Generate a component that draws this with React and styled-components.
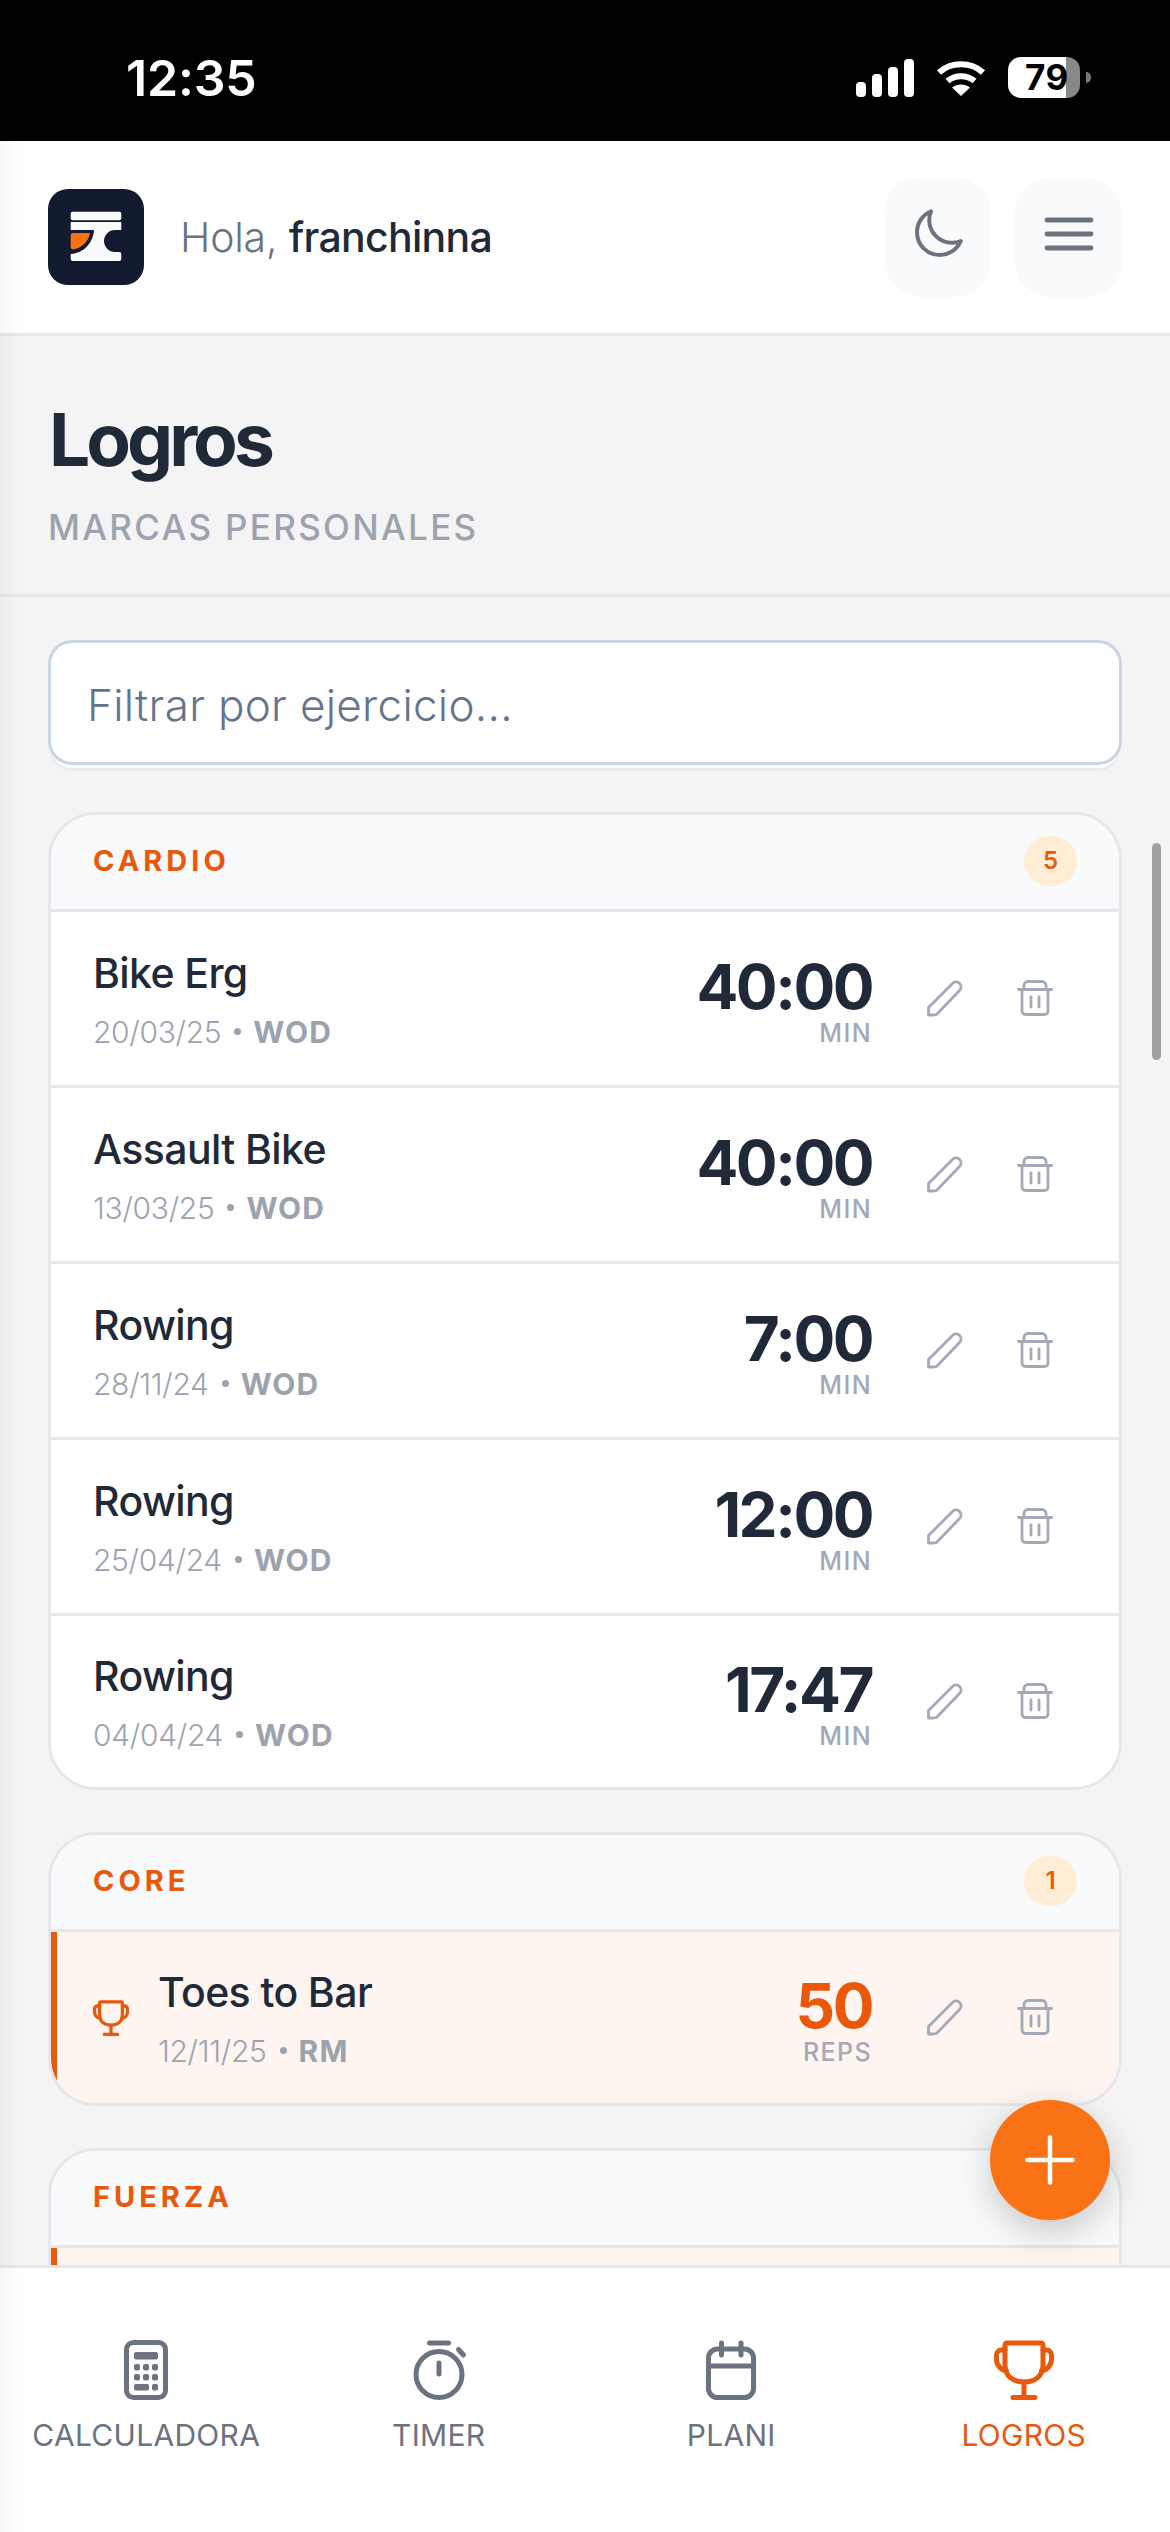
import React from "react";
import styled, { createGlobalStyle } from "styled-components";

const GlobalStyle = createGlobalStyle`
  * {
    box-sizing: border-box;
  }
  html, body {
    margin: 0;
    padding: 0;
    background: #f4f4f5;
    font-family: Inter, "Liberation Sans", sans-serif;
  }
`;

const Screen = styled.div`
  position: relative;
  width: 1170px;
  height: 2532px;
  display: flex;
  flex-direction: column;
  overflow: hidden;
  background: #f4f4f5;
`;

const EdgeShade = styled.div`
  position: absolute;
  top: 141px;
  left: 0;
  bottom: 0;
  width: 22px;
  background: linear-gradient(to right, rgba(0, 0, 0, 0.03), rgba(0, 0, 0, 0));
  pointer-events: none;
  z-index: 5;
`;

/* status bar */
const StatusBar = styled.div`
  height: 141px;
  flex-shrink: 0;
  background: #000;
  color: #fff;
  display: flex;
  align-items: flex-start;
  justify-content: space-between;
  padding: 57px 79px 0 126px;
`;

const Clock = styled.div`
  font-size: 50px;
  font-weight: 600;
  line-height: 42px;
  letter-spacing: -0.2px;
`;

const StatusIcons = styled.div`
  display: flex;
  align-items: flex-start;
`;

const Signal = styled.svg`
  width: 58px;
  height: 40px;
  margin-top: 1px;
  margin-right: 22px;
`;

const Wifi = styled.svg`
  width: 50px;
  height: 38px;
  margin-top: 2px;
  margin-right: 22px;
`;

const BatteryBody = styled.div`
  width: 72px;
  height: 41px;
  border-radius: 13px;
  overflow: hidden;
  background: linear-gradient(to right, #fff 0 58px, #888 58px);
  color: #000;
  font-size: 35px;
  font-weight: 700;
  line-height: 41px;
  padding-left: 17px;
  letter-spacing: 0.5px;
`;

const BatteryTip = styled.div`
  width: 5px;
  height: 11px;
  margin: 15px 0 0 6px;
  background: #777;
  border-radius: 0 6px 6px 0;
`;

/* top header */
const Header = styled.header`
  height: 195px;
  flex-shrink: 0;
  background: #fff;
  border-bottom: 3px solid #e5e7eb;
  display: flex;
  align-items: center;
  padding: 0 48px;
`;

const Logo = styled.svg`
  width: 96px;
  height: 96px;
  flex-shrink: 0;
`;

const Greeting = styled.div`
  margin-left: 36px;
  font-size: 41px;
  font-weight: 300;
  color: #6b7280;
  letter-spacing: -0.2px;
  flex: 1;

  strong {
    font-weight: 500;
    color: #1f2937;
    letter-spacing: -0.7px;
  }
`;

const HeaderButton = styled.button`
  width: 107px;
  height: 120px;
  margin-left: 24px;
  background: #f9fafb;
  border: none;
  border-radius: 36px;
  padding: 0 0 6px;
  display: flex;
  align-items: center;
  justify-content: center;
  color: #6b7280;
`;

/* main scroll area */
const Main = styled.main`
  flex: 1;
  min-height: 0;
  overflow: hidden;
`;

const PageHead = styled.div`
  height: 261px;
  padding: 60px 48px 0;
  border-bottom: 3px solid #e5e7eb;
`;

const Title = styled.h1`
  margin: 0 0 0 1px;
  font-size: 73px;
  line-height: 88px;
  font-weight: 700;
  letter-spacing: -4px;
  color: #1f2937;
`;

const Subtitle = styled.div`
  margin-top: 23px;
  font-size: 35px;
  line-height: 40px;
  font-weight: 500;
  letter-spacing: 2.3px;
  color: #9ca3af;
`;

const Content = styled.div`
  padding: 43px 48px 0;
  display: flex;
  flex-direction: column;
`;

const FilterInput = styled.input`
  width: 100%;
  height: 125px;
  border: 3px solid #cbd5e1;
  border-radius: 24px;
  background: #fff;
  padding: 4px 36px 0;
  font-family: inherit;
  font-size: 44px;
  font-weight: 300;
  letter-spacing: 0.3px;
  color: #1f2937;
  outline: none;
  margin-bottom: 47px;
  box-shadow: 0 6px 0 -3px #fff, 0 9px 0 -3px #e9eaec;

  &::placeholder {
    color: #64748b;
    opacity: 1;
  }
`;

const Card = styled.section`
  border: 3px solid #e5e7eb;
  border-radius: 48px;
  overflow: hidden;
  background: #fff;
  margin-bottom: 42px;
`;

const CardHeader = styled.div`
  height: 97px;
  background: #f9fafb;
  border-bottom: 3px solid #e5e7eb;
  display: flex;
  align-items: center;
  justify-content: space-between;
  padding: 0 42px 3px;
`;

const CardTitle = styled.div`
  font-size: 29px;
  font-weight: 700;
  letter-spacing: 4px;
  color: #ea580c;
`;

const CountBadge = styled.div`
  min-width: 53px;
  height: 50px;
  padding: 0 19px;
  border-radius: 25px;
  background: #ffedd5;
  color: #ea580c;
  font-size: 24px;
  font-weight: 600;
  display: flex;
  align-items: center;
  justify-content: center;
`;

const Row = styled.div`
  height: ${(p) => (p.$last ? "171px" : "176px")};
  display: flex;
  align-items: center;
  padding: 0 54px 0 ${(p) => (p.$record ? "36px" : "42px")};
  background: ${(p) => (p.$record ? "#fef5f0" : "#fff")};
  border-left: ${(p) => (p.$record ? "6px solid #ea580c" : "none")};
  border-bottom: ${(p) => (p.$last ? "none" : "3px solid #e5e7eb")};
`;

const RecordMark = styled.div`
  width: 36px;
  margin-right: 29px;
  color: #ea580c;
  display: flex;
  flex-shrink: 0;
`;

const RowInfo = styled.div`
  flex: 1;
  min-width: 0;
`;

const RowName = styled.div`
  font-size: 41px;
  line-height: 50px;
  font-weight: 500;
  color: #1f2937;
  letter-spacing: -0.6px;
`;

const RowMeta = styled.div`
  margin-top: 16px;
  display: flex;
  align-items: center;
  font-size: 30px;
  line-height: 36px;
  color: #9ca3af;
`;

const MetaDate = styled.span`
  font-weight: 300;
  letter-spacing: -0.3px;
`;

const MetaDot = styled.span`
  width: 7px;
  height: 7px;
  border-radius: 50%;
  background: #9ca3af;
  margin: 0 12px 0 13px;
`;

const MetaKind = styled.span`
  font-weight: 700;
  letter-spacing: 1.2px;
`;

const RowValue = styled.div`
  display: flex;
  flex-direction: column;
  align-items: flex-end;
  margin-right: 43px;
  margin-top: 4px;
`;

const ValueNumber = styled.div`
  font-size: 62px;
  line-height: 64px;
  font-weight: 700;
  letter-spacing: -2.5px;
  color: ${(p) => (p.$record ? "#ea580c" : "#1f2937")};
`;

const ValueUnit = styled.div`
  font-size: 25px;
  line-height: 28px;
  font-weight: 500;
  letter-spacing: 1.4px;
  color: #a3a9b6;
`;

const ActionButton = styled.button`
  width: 60px;
  height: 60px;
  background: none;
  border: none;
  padding: 0 0 2px;
  margin-left: ${(p) => (p.$spaced ? "30px" : "0")};
  display: flex;
  align-items: center;
  justify-content: center;
  color: #a3a9b6;
`;

/* overlays */
const ScrollThumb = styled.div`
  position: absolute;
  left: 1152px;
  top: 843px;
  width: 9px;
  height: 217px;
  border-radius: 5px;
  background: #a0a0a0;
`;

const Fab = styled.button`
  position: absolute;
  left: 990px;
  top: 2100px;
  width: 120px;
  height: 120px;
  border-radius: 50%;
  border: none;
  padding: 0;
  background: #f97316;
  color: #fff;
  display: flex;
  align-items: center;
  justify-content: center;
  box-shadow: 0 12px 36px rgba(0, 0, 0, 0.2);
  z-index: 3;
`;

/* bottom nav */
const BottomNav = styled.nav`
  height: 267px;
  flex-shrink: 0;
  background: #fff;
  border-top: 3px solid #e5e7eb;
  display: grid;
  grid-template-columns: repeat(4, 1fr);
  padding-top: 72px;
  position: relative;
  z-index: 2;
`;

const NavItem = styled.div`
  display: flex;
  flex-direction: column;
  align-items: center;
  color: ${(p) => (p.$active ? "#ea580c" : "#6b7280")};
`;

const NavIcon = styled.div`
  height: 60px;
  display: flex;
  align-items: center;
  justify-content: center;
`;

const NavLabel = styled.div`
  margin-top: 17px;
  font-size: 30px;
  line-height: 36px;
  font-weight: 400;
  letter-spacing: 0.3px;
`;

const stroke = {
  fill: "none",
  stroke: "currentColor",
  strokeLinecap: "round",
  strokeLinejoin: "round",
};

function TrophyIcon({ size, width = 5 }) {
  return (
    <svg width={size} height={size} viewBox="0 0 60 60" {...stroke} strokeWidth={width}>
      <path d="M13 3h34a2 2 0 0 1 2 2v20c0 11-8 17-19 17s-19-6-19-17V5a2 2 0 0 1 2-2z" />
      <path d="M11 10H7.500a5 5 0 0 0-5 5v4c0 6 4 11 10 12" />
      <path d="M49 10h3.500a5 5 0 0 1 5 5v4c0 6-4 11-10 12" />
      <path d="M30 42v15M19 57.500h22" />
    </svg>
  );
}

function PencilIcon() {
  return (
    <svg width="40" height="40" viewBox="0 0 40 40" {...stroke} strokeWidth="2.8">
      <path d="M3.500 37v-7.500L28 5a5 5 0 0 1 7 7L11.500 36.500 9 37z" />
    </svg>
  );
}

function TrashIcon() {
  return (
    <svg width="36" height="36" viewBox="0 0 36 36" {...stroke} strokeWidth="2.8">
      <path d="M1.500 9.500h33" />
      <path d="M7 9V5.500a4 4 0 0 1 4-4h14a4 4 0 0 1 4 4V9" />
      <path d="M5 9.500V31a3.500 3.500 0 0 0 3.500 3.500h19A3.500 3.500 0 0 0 31 31V9.500" />
      <path d="M14 17v10M22 17v10" />
    </svg>
  );
}

function PersonalBest({ item, last }) {
  return (
    <Row $record={item.record} $last={last}>
      {item.record && (
        <RecordMark>
          <TrophyIcon size={36} width={5.5} />
        </RecordMark>
      )}
      <RowInfo>
        <RowName>{item.name}</RowName>
        <RowMeta>
          <MetaDate>{item.date}</MetaDate>
          <MetaDot />
          <MetaKind>{item.kind}</MetaKind>
        </RowMeta>
      </RowInfo>
      <RowValue>
        <ValueNumber $record={item.record}>{item.value}</ValueNumber>
        <ValueUnit>{item.unit}</ValueUnit>
      </RowValue>
      <ActionButton>
        <PencilIcon />
      </ActionButton>
      <ActionButton $spaced>
        <TrashIcon />
      </ActionButton>
    </Row>
  );
}

const groups = [
  {
    title: "CARDIO",
    count: 5,
    items: [
      { name: "Bike Erg", date: "20/03/25", kind: "WOD", value: "40:00", unit: "MIN" },
      { name: "Assault Bike", date: "13/03/25", kind: "WOD", value: "40:00", unit: "MIN" },
      { name: "Rowing", date: "28/11/24", kind: "WOD", value: "7:00", unit: "MIN" },
      { name: "Rowing", date: "25/04/24", kind: "WOD", value: "12:00", unit: "MIN" },
      { name: "Rowing", date: "04/04/24", kind: "WOD", value: "17:47", unit: "MIN" },
    ],
  },
  {
    title: "CORE",
    count: 1,
    items: [
      { name: "Toes to Bar", date: "12/11/25", kind: "RM", value: "50", unit: "REPS", record: true },
    ],
  },
];

export default function App() {
  return (
    <Screen>
      <GlobalStyle />
      <StatusBar>
        <Clock>12:35</Clock>
        <StatusIcons>
          <Signal viewBox="0 0 58 40" fill="#fff">
            <rect x="0" y="24" width="10" height="15" rx="4" />
            <rect x="16" y="16" width="10" height="23" rx="4" />
            <rect x="32" y="9" width="10" height="30" rx="4" />
            <rect x="48" y="1" width="10" height="38" rx="4" />
          </Signal>
          <Wifi viewBox="0 0 50 38">
            <path d="M3 13.500C15 2.500 35 2.500 47 13.500" fill="none" stroke="#fff" strokeWidth="6" />
            <path d="M11.500 22C19 15.500 31 15.500 38.500 22" fill="none" stroke="#fff" strokeWidth="6" />
            <path d="M25 37L16 28.500C21 24.500 29 24.500 34 28.500z" fill="#fff" />
          </Wifi>
          <BatteryBody>79</BatteryBody>
          <BatteryTip />
        </StatusIcons>
      </StatusBar>

      <Header>
        <Logo viewBox="0 0 96 96">
          <rect width="96" height="96" rx="20" fill="#111a2e" />
          <rect x="22.700" y="22.700" width="50.600" height="8.500" rx="2" fill="#f8fafc" />
          <path
            d="M22.700 33H73.300V41H67A11 11 0 0 0 67 63H71.300A2 2 0 0 1 73.300 65V70A2 2 0 0 1 71.300 72H24.700A2 2 0 0 1 22.700 70V65C36 64 45 54 46 41H22.700Z"
            fill="#f8fafc"
          />
          <path d="M25 44H42C41 52 34 59 25 60.500A2.500 2.500 0 0 1 22.700 58V46A2.500 2.500 0 0 1 25 44Z" fill="#f97316" />
        </Logo>
        <Greeting>
          Hola, <strong>franchinna</strong>
        </Greeting>
        <HeaderButton>
          <svg width="56" height="56" viewBox="0 0 24 24" {...stroke} strokeWidth="1.7">
            <path d="M21.752 15.002A9.72 9.72 0 0 1 18 15.750c-5.385 0-9.750-4.365-9.750-9.750 0-1.330.266-2.597.748-3.752A9.753 9.753 0 0 0 3 11.250C3 16.635 7.365 21 12.750 21a9.753 9.753 0 0 0 9.002-5.998Z" />
          </svg>
        </HeaderButton>
        <HeaderButton>
          <svg width="64" height="64" viewBox="0 0 24 24" {...stroke} strokeWidth="1.8">
            <path d="M3.750 6.750h16.500M3.750 12h16.500M3.750 17.250h16.500" />
          </svg>
        </HeaderButton>
      </Header>

      <Main>
        <PageHead>
          <Title>Logros</Title>
          <Subtitle>MARCAS PERSONALES</Subtitle>
        </PageHead>
        <Content>
          <FilterInput placeholder="Filtrar por ejercicio..." />
          {groups.map((group) => (
            <Card key={group.title}>
              <CardHeader>
                <CardTitle>{group.title}</CardTitle>
                <CountBadge>{group.count}</CountBadge>
              </CardHeader>
              {group.items.map((item, i) => (
                <PersonalBest
                  key={item.date}
                  item={item}
                  last={i === group.items.length - 1}
                />
              ))}
            </Card>
          ))}
          {/* only the top of this group shows above the nav, its badge digit sits under the fab */}
          <Card>
            <CardHeader>
              <CardTitle>FUERZA</CardTitle>
              <CountBadge />
            </CardHeader>
            <Row $record />
          </Card>
        </Content>
      </Main>

      <BottomNav>
        <NavItem>
          <NavIcon>
            <svg width="44" height="60" viewBox="0 0 44 60">
              <rect x="2.500" y="2.500" width="39" height="55" rx="7" fill="none" stroke="currentColor" strokeWidth="5" />
              <g fill="currentColor">
                <rect x="10" y="12" width="24" height="7.500" rx="2" />
                <rect x="10" y="24" width="6" height="6.500" rx="2" />
                <rect x="19" y="24" width="6" height="6.500" rx="2" />
                <rect x="28" y="24" width="6" height="6.500" rx="2" />
                <rect x="10" y="34" width="6" height="6.500" rx="2" />
                <rect x="19" y="34" width="6" height="6.500" rx="2" />
                <rect x="28" y="34" width="6" height="6.500" rx="2" />
                <rect x="10" y="44" width="15" height="6.500" rx="2" />
                <rect x="28" y="44" width="6" height="6.500" rx="2" />
              </g>
            </svg>
          </NavIcon>
          <NavLabel>CALCULADORA</NavLabel>
        </NavItem>
        <NavItem>
          <NavIcon>
            <svg width="60" height="60" viewBox="0 0 60 60" {...stroke} strokeWidth="5">
              <circle cx="30" cy="34.500" r="23" />
              <path d="M20.500 3h19M30 23v11M49.500 9.500l5 5.500" />
            </svg>
          </NavIcon>
          <NavLabel>TIMER</NavLabel>
        </NavItem>
        <NavItem>
          <NavIcon>
            <svg width="50" height="60" viewBox="0 0 50 60" {...stroke} strokeWidth="5">
              <rect x="2.500" y="9" width="45" height="48.500" rx="9" />
              <path d="M2.500 26h45M15.500 3v12M35 3v12" />
            </svg>
          </NavIcon>
          <NavLabel>PLANI</NavLabel>
        </NavItem>
        <NavItem $active>
          <NavIcon>
            <TrophyIcon size={60} />
          </NavIcon>
          <NavLabel>LOGROS</NavLabel>
        </NavItem>
      </BottomNav>

      <ScrollThumb />
      <Fab>
        <svg width="72" height="72" viewBox="0 0 24 24" {...stroke} strokeWidth="1.5">
          <path d="M12 4.500v15m7.500-7.500h-15" />
        </svg>
      </Fab>
      <EdgeShade />
    </Screen>
  );
}
